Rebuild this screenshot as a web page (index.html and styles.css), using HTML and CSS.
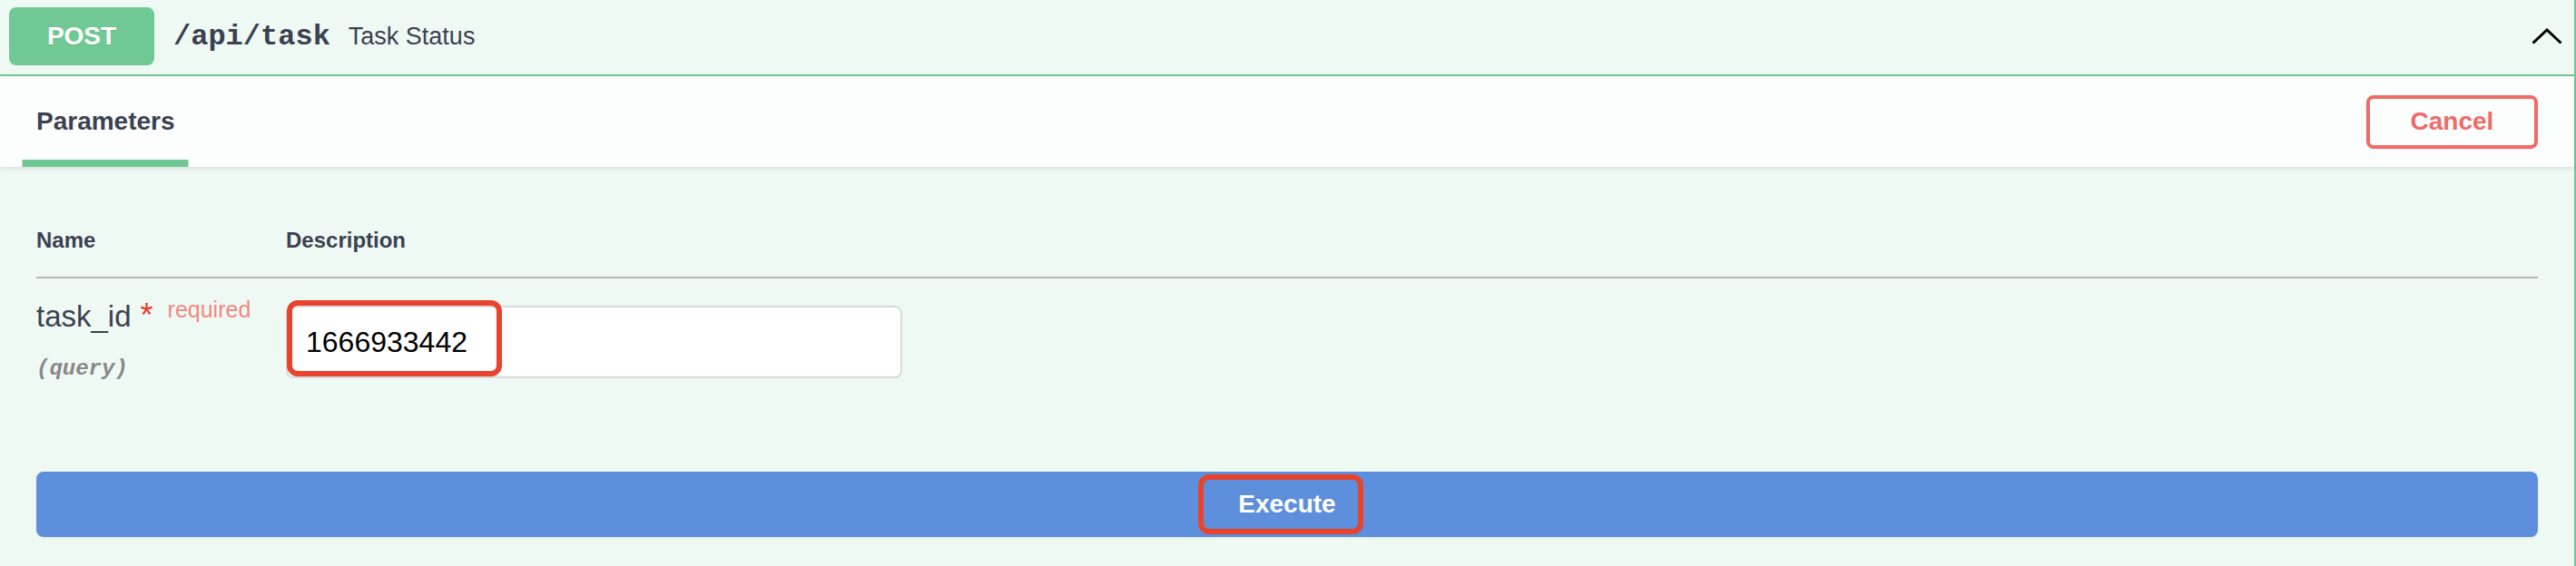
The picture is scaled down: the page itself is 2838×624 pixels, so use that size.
FILE: index.html
```html
<!DOCTYPE html>
<html>
<head>
<meta charset="utf-8">
<link rel="stylesheet" href="styles.css">
</head>
<body>
<div class="opblock">
  <div class="summary">
    <span class="method">POST</span>
    <span class="path">/api/task</span>
    <span class="desc">Task Status</span>
    <svg class="arrow" viewBox="0 0 34 18" width="34" height="18"><path d="M1.5 16.5 L17 2 L32.5 16.5" fill="none" stroke="#000" stroke-width="3"/></svg>
  </div>
  <div class="section-header">
    <div class="tab"><span class="tab-label">Parameters</span></div>
    <button class="btn-cancel">Cancel</button>
  </div>
  <div class="params">
    <div class="row head">
      <div class="col-name">Name</div>
      <div class="col-desc">Description</div>
    </div>
    <div class="row body">
      <div class="col-name">
        <div class="pname">task_id<span class="star">&nbsp;*</span><span class="req">required</span></div>
        <div class="pin">(query)</div>
      </div>
      <div class="col-desc">
        <div class="input-wrap">
          <input class="pinput" type="text" value="1666933442">
          <span class="mark mark-input"></span>
        </div>
      </div>
    </div>
  </div>
  <div class="exec-wrap">
    <button class="btn-exec"><span class="exec-label">Execute<span class="mark mark-exec"></span></span></button>
  </div>
</div>
</body>
</html>
```
FILE: styles.css
```css
html, body {
  margin: 0;
  padding: 0;
}
body {
  width: 2838px;
  height: 624px;
  overflow: hidden;
  background: #eff9f4;
  font-family: "Liberation Sans", Arial, sans-serif;
  color: #3b4151;
}
.opblock {
  box-sizing: border-box;
  width: 2838px;
  height: 624px;
  border-right: 2px solid #6fc794;
  background: #eff9f4;
}
.summary {
  box-sizing: border-box;
  height: 84px;
  display: flex;
  align-items: center;
  padding: 8px 13px 10px 10px;
  border-bottom: 2px solid #6fc794;
}
.method {
  width: 160px;
  height: 64px;
  display: flex;
  align-items: center;
  justify-content: center;
  background: #70c894;
  color: #fff;
  font-weight: 700;
  font-size: 28px;
  border-radius: 8px;
  text-shadow: 0 1px 0 rgba(0,0,0,.1);
}
.path {
  font-family: "Liberation Mono", "Courier New", monospace;
  font-weight: 700;
  font-size: 32px;
  padding: 0 20px 0 21px;
}
.desc {
  font-size: 27px;
}
.arrow {
  margin-left: auto;
  display: block;
}
.section-header {
  position: relative;
  z-index: 1;
  box-sizing: border-box;
  height: 100px;
  padding: 0 40px;
  display: flex;
  justify-content: space-between;
  align-items: stretch;
  background: #fcfefd;
  box-shadow: 0 2px 4px rgba(0,0,0,.1);
}
.tab {
  display: flex;
}
.tab-label {
  position: relative;
  display: flex;
  align-items: center;
  font-weight: 700;
  font-size: 28px;
}
.tab-label::after {
  content: "";
  position: absolute;
  bottom: 0;
  left: 50%;
  width: 120%;
  height: 8px;
  transform: translateX(-50%);
  background: #6fc794;
}
.btn-cancel {
  align-self: center;
  box-sizing: border-box;
  width: 189px;
  height: 59px;
  border: 4px solid #ee6b67;
  border-radius: 8px;
  background: transparent;
  color: #ee6b67;
  font-family: "Liberation Sans", Arial, sans-serif;
  font-weight: 700;
  font-size: 28px;
  padding: 0;
  box-shadow: 0 1px 2px rgba(0,0,0,.1);
}
.params {
  padding: 0 40px;
}
.row {
  display: flex;
}
.head {
  padding-top: 67px;
  padding-bottom: 26px;
  border-bottom: 2px solid #b1b8b5;
  font-weight: 700;
  font-size: 24px;
  line-height: 28px;
}
.col-name {
  width: 275px;
  flex: none;
}
.col-desc {
  flex: 1;
}
.body {
  height: 173px;
}
.body .col-name {
  padding-top: 24px;
}
.pname {
  font-size: 33px;
  line-height: 36px;
  height: 36px;
  white-space: nowrap;
}
.star {
  color: #e9382b;
  font-size: 36px;
  line-height: 0;
}
.req {
  position: relative;
  top: -10px;
  padding-left: 16px;
  font-size: 25px;
  line-height: 0;
  color: #f08a80;
}
.pin {
  margin-top: 26px;
  font-family: "Liberation Mono", "Courier New", monospace;
  font-style: italic;
  font-weight: 700;
  font-size: 24px;
  line-height: 28px;
  color: #888;
}
.input-wrap {
  position: relative;
  display: inline-block;
  margin-top: 30px;
}
.pinput {
  display: block;
  box-sizing: border-box;
  width: 679px;
  height: 80px;
  border: 2px solid #d9d9d9;
  border-radius: 8px;
  padding: 0 20px;
  background: #fff;
  color: #000;
  font-family: "Liberation Sans", Arial, sans-serif;
  font-size: 32px;
  outline: none;
}
.mark {
  position: absolute;
  box-sizing: border-box;
  border: 6px solid #e8432d;
  border-radius: 12px;
  pointer-events: none;
}
.mark-input {
  left: 1px;
  top: -6px;
  width: 237px;
  height: 84px;
}
.exec-wrap {
  padding: 40px 40px 0;
}
.btn-exec {
  display: flex;
  align-items: center;
  justify-content: center;
  width: 100%;
  height: 72px;
  border: none;
  border-radius: 8px;
  background: #5d8fdc;
  color: #fff;
  font-family: "Liberation Sans", Arial, sans-serif;
  font-weight: 700;
  font-size: 28px;
  padding: 0;
  box-shadow: 0 1px 2px rgba(0,0,0,.1);
}
.exec-label {
  position: relative;
  display: inline-block;
  line-height: 32px;
}
.mark-exec {
  left: -44px;
  top: -17px;
  width: 182px;
  height: 66px;
}
```
